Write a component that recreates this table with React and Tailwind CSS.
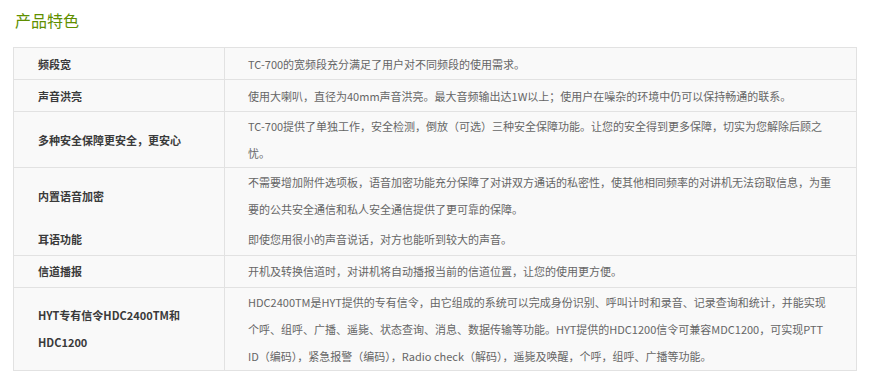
const rows = [
  {
    name: ["频段宽"],
    desc: ["TC-700的宽频段充分满足了用户对不同频段的使用需求。"],
  },
  {
    name: ["声音洪亮"],
    desc: ["使用大喇叭，直径为40mm声音洪亮。最大音频输出达1W以上；使用户在噪杂的环境中仍可以保持畅通的联系。"],
  },
  {
    name: ["多种安全保障更安全，更安心"],
    desc: [
      "TC-700提供了单独工作，安全检测，倒放（可选）三种安全保障功能。让您的安全得到更多保障，切实为您解除后顾之",
      "忧。",
    ],
  },
  {
    name: ["内置语音加密"],
    desc: [
      "不需要增加附件选项板，语音加密功能充分保障了对讲双方通话的私密性，使其他相同频率的对讲机无法窃取信息，为重",
      "要的公共安全通信和私人安全通信提供了更可靠的保障。",
    ],
  },
  {
    name: ["耳语功能"],
    desc: ["即使您用很小的声音说话，对方也能听到较大的声音。"],
    noTop: true,
  },
  {
    name: ["信道播报"],
    desc: ["开机及转换信道时，对讲机将自动播报当前的信道位置，让您的使用更方便。"],
  },
  {
    name: ["HYT专有信令HDC2400TM和", "HDC1200"],
    desc: [
      "HDC2400TM是HYT提供的专有信令，由它组成的系统可以完成身份识别、呼叫计时和录音、记录查询和统计，并能实现",
      "个呼、组呼、广播、遥毙、状态查询、消息、数据传输等功能。HYT提供的HDC1200信令可兼容MDC1200，可实现PTT",
      "ID（编码），紧急报警（编码），Radio check（解码），遥毙及唤醒，个呼，组呼、广播等功能。",
    ],
  },
];

function Lines({ lines }) {
  return lines.map((l, i) => (
    <span key={i} className="block whitespace-nowrap">
      {l}
    </span>
  ));
}

export default function App() {
  return (
    <div
      className="w-[874px] h-[388px] bg-white pl-[13px] pr-[17px] overflow-hidden"
      style={{ fontFamily: '"Microsoft YaHei", "Noto Sans CJK SC", sans-serif' }}
    >
      <h2 className="pl-[2px] pt-[9px] h-[47px] text-[16px] leading-[22px] text-[#5f8f00] font-normal">
        产品特色
      </h2>
      <table className="w-full table-fixed border-collapse text-[11px] leading-[27px] bg-[#f9f9f9]">
        <colgroup>
          <col className="w-[211px]" />
          <col />
        </colgroup>
        <tbody>
          {rows.map((r, i) => (
            <tr
              key={i}
              className={r.noTop ? "" : "border-t border-[#e2e2e2]"}
            >
              <td className="h-[32px] pl-[24px] pr-2 pt-px pb-0 align-middle font-bold text-[#3a3a3a] border-l border-r border-[#e2e2e2]">
                <Lines lines={r.name} />
              </td>
              <td className="h-[32px] pl-[23px] pr-2 pt-px pb-0 align-middle text-[#666] border-r border-[#e2e2e2]">
                <Lines lines={r.desc} />
              </td>
            </tr>
          ))}
          <tr className="border-t border-[#e2e2e2]">
            <td colSpan={2} className="h-0 p-0" />
          </tr>
        </tbody>
      </table>
    </div>
  );
}
